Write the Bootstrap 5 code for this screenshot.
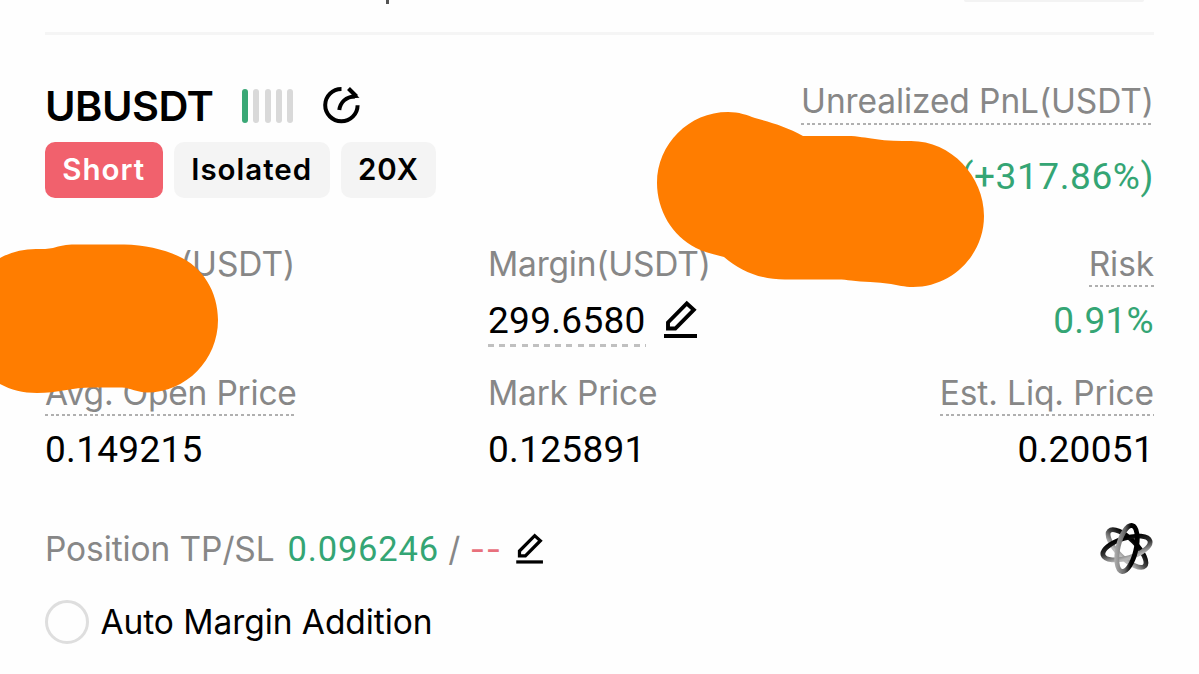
<!DOCTYPE html>
<html lang="en">
<head>
<meta charset="utf-8">
<meta name="viewport" content="width=device-width, initial-scale=1">
<title>UBUSDT position</title>
<link rel="stylesheet" href="https://cdn.jsdelivr.net/npm/bootstrap@5.3.0/dist/css/bootstrap.min.css">
<style>
  body { font-family: Inter, "Liberation Sans", sans-serif; color: #000; background: #fefefe; }
  .screen { height: 674px; padding: 0 45px; }
  .prev-row { height: 32px; }
  .prev-stem { width: 3px; height: 4px; margin-left: 341px; background: #555; }
  .prev-pill { width: 180px; height: 2px; margin-right: 10px; border-radius: 0 0 20px 20px; background: #f3f3f3; }
  .rule { height: 3px; background: #f5f5f5; }
  .head { height: 205px; padding-top: 43px; }
  .pair { font-size: 41.5px; line-height: 56px; font-weight: 600; letter-spacing: -.5px; }
  .bar-set { gap: 5.3px; margin-left: 28.5px; }
  .bar-set span { width: 6px; height: 34px; border-radius: 3px; background: #d9d9d9; }
  .bar-set span:first-child { background: #3aa876; }
  .share-icon { margin-left: 26.5px; margin-top: -2px; }
  .chips { margin-top: 8px; gap: 11.5px; }
  .chip { height: 56px; line-height: 55px; border-radius: 10px; background: #f4f4f4; font-size: 29.5px; font-weight: 600; letter-spacing: 1px; text-align: center; }
  .chip-short { background: #f1616d; color: #fff; }
  .lbl { font-size: 33.5px; line-height: 46px; height: 47px; color: #878787; letter-spacing: -.1px; white-space: nowrap; display: inline-block; font-weight: 375; }
  .cells .lbl { line-height: 48px; }
  .cells .lbl-tight { letter-spacing: -.21px; }
  .dots { background: repeating-linear-gradient(90deg, #b0b0b0 0 3px, transparent 3px 5.6px) left bottom / 100% 2px no-repeat; }
  .num { font-family: Roboto, sans-serif; font-size: 37px; line-height: 48px; letter-spacing: .3px; white-space: nowrap; }
  .num-sm { font-size: 34.5px; letter-spacing: .8px; }
  .num-pnl { letter-spacing: .6px; }
  .dashes { height: 50px; background: repeating-linear-gradient(90deg, #c0c0c0 0 6px, transparent 6px 11.2px) left bottom / 100% 3px no-repeat; }
  .green { color: #34a574; }
  .red { color: #e8707c; }
  .cells { display: grid; grid-template-columns: 443px 1fr auto; grid-template-rows: 129px 129px; }
  .cell-value { margin-top: 10px; height: 50px; }
  .masked-label { padding-left: 135px; }
  .tpsl { height: 46px; margin-top: 28px; }
  .radio { width: 44px; height: 44px; border: 3px solid #dedede; border-radius: 50%; }
  .auto-row { margin-top: 28px; height: 44px; }
  .auto-label { color: #000; font-weight: 400; letter-spacing: -.06px; margin-left: 11.5px; height: 46px; }
  .mask { pointer-events: none; }
</style>
</head>
<body>
<main class="screen position-relative overflow-hidden">
  <div class="prev-row d-flex justify-content-between align-items-start">
    <div class="prev-stem"></div><div class="prev-pill"></div>
  </div>
  <div class="rule"></div>

  <header class="head d-flex justify-content-between">
    <div>
      <div class="d-flex align-items-center">
        <span class="pair">UBUSDT</span>
        <div class="bar-set d-flex"><span></span><span></span><span></span><span></span><span></span></div>
        <svg class="share-icon" width="44" height="44" viewBox="0 0 44 44" fill="none" stroke="#000" stroke-width="4">
          <path d="M21.500 5.900A16.200 16.200 0 1 0 37.600 22.200"/><path d="M19.300 27C20.200 19.500 26 13.400 35 13.400"/><path d="M28.500 5.500L36.500 13.500"/><path d="M34 9.500L39.500 14.800L32 15.200Z" fill="#000" stroke="none"/>
        </svg>
      </div>
      <div class="chips d-flex">
        <span class="chip chip-short" style="width:117.500px">Short</span>
        <span class="chip" style="width:155.500px">Isolated</span>
        <span class="chip" style="width:95px">20X</span>
      </div>
    </div>
    <div class="text-end d-flex flex-column align-items-end">
      <span class="lbl dots">Unrealized PnL(USDT)</span>
      <span class="num num-pnl green" style="margin-top:28px">(+317.86%)</span>
    </div>
  </header>

  <section class="cells">
    <div><span class="lbl masked-label">(USDT)</span></div>
    <div>
      <span class="lbl lbl-tight">Margin(USDT)</span>
      <div class="cell-value d-flex align-items-start">
        <span class="num dashes">299.6580</span>
        <svg style="margin:2px 0 0 17.500px" width="36" height="42" viewBox="0 0 36 42" fill="none" stroke="#000" stroke-width="3.900"><path d="M5 29.500V23.500L23.800 4.500L30.800 10.800L12.300 29.500Z"/><path d="M1 37H34"/></svg>
      </div>
    </div>
    <div class="text-end">
      <span class="lbl dots">Risk</span>
      <div class="cell-value"><span class="num green">0.91%</span></div>
    </div>
    <div>
      <span class="lbl lbl-tight dots">Avg. Open Price</span>
      <div class="cell-value"><span class="num">0.149215</span></div>
    </div>
    <div>
      <span class="lbl lbl-tight">Mark Price</span>
      <div class="cell-value"><span class="num">0.125891</span></div>
    </div>
    <div class="text-end">
      <span class="lbl dots">Est. Liq. Price</span>
      <div class="cell-value"><span class="num">0.20051</span></div>
    </div>
  </section>

  <div class="tpsl d-flex align-items-center">
    <span class="lbl">Position TP/SL</span>
    <span class="num num-sm green" style="margin-left:13px">0.096246</span>
    <span class="lbl" style="margin-left:9.500px">/</span>
    <span class="lbl red" style="margin-left:9.500px;letter-spacing:.5px">--</span>
    <svg style="margin-left:13.500px" width="30" height="34" viewBox="0 0 36 42" fill="none" stroke="#000" stroke-width="4"><path d="M5 29.500V23.500L23.800 4.500L30.800 10.800L12.300 29.500Z"/><path d="M1 37H34"/></svg>
    <svg class="ms-auto" width="54" height="54" viewBox="0 0 54 54" fill="none" stroke-width="4.800">
      <defs>
        <linearGradient id="ringA" x1="0" y1="0" x2="0" y2="1"><stop offset="0" stop-color="#000"/><stop offset=".5" stop-color="#444"/><stop offset="1" stop-color="#bbb"/></linearGradient>
        <linearGradient id="ringB" x1="0" y1="1" x2="1" y2=".4"><stop offset="0" stop-color="#bbb"/><stop offset=".5" stop-color="#666"/><stop offset=".75" stop-color="#000"/></linearGradient>
        <linearGradient id="ringC" x1="0" y1="0" x2="0" y2="1"><stop offset="0" stop-color="#000"/><stop offset=".5" stop-color="#333"/><stop offset="1" stop-color="#b5b5b5"/></linearGradient>
      </defs>
      <ellipse cx="27" cy="26.500" rx="25" ry="9.500" transform="rotate(45 27 26.500)" stroke="url(#ringA)"/>
      <ellipse cx="26.500" cy="26" rx="24.500" ry="10" transform="rotate(-17 26.500 26)" stroke="url(#ringC)"/>
      <ellipse cx="27" cy="26.500" rx="9" ry="23.500" transform="rotate(13 27 26.500)" stroke="url(#ringB)"/>
    </svg>
  </div>

  <div class="auto-row d-flex align-items-center">
    <span class="radio"></span>
    <span class="lbl auto-label">Auto Margin Addition</span>
  </div>

  <svg class="mask position-absolute top-0 start-0" width="1199" height="674" viewBox="0 0 1199 674" fill="#ff7d00">
    <path d="M657 183C657 144 689 112 728 112C739 112 747 115 755 118C773 123 787 127 803 136H847C859 136 865 138 875 139C887 141 900 141 911 141C951 141 984 176 984 216C984 255 952 287 913 287C904 287 898 285 891 284C877 282 863 282 851 280.500C847 280 843 279.500 838 279.500H785C760 279.500 740 271 724 257C713 254 704 252 696 248C672 236 657 210 657 183Z"/>
    <path d="M0 258C11 252 23 249 36 249C43 249 48 249 53 248C60 246 66 244.500 75 244.500H124C144 245 163 249 178 256C203 267 218 292 218 320C218 360 186 392.500 147 392.500C138 392.500 130 388 122 387.500H92C72 387.500 58 393 37 393C23 393 11 390 0 384Z"/>
  </svg>
</main>
<script src="https://cdn.jsdelivr.net/npm/bootstrap@5.3.0/dist/js/bootstrap.bundle.min.js"></script>
</body>
</html>
